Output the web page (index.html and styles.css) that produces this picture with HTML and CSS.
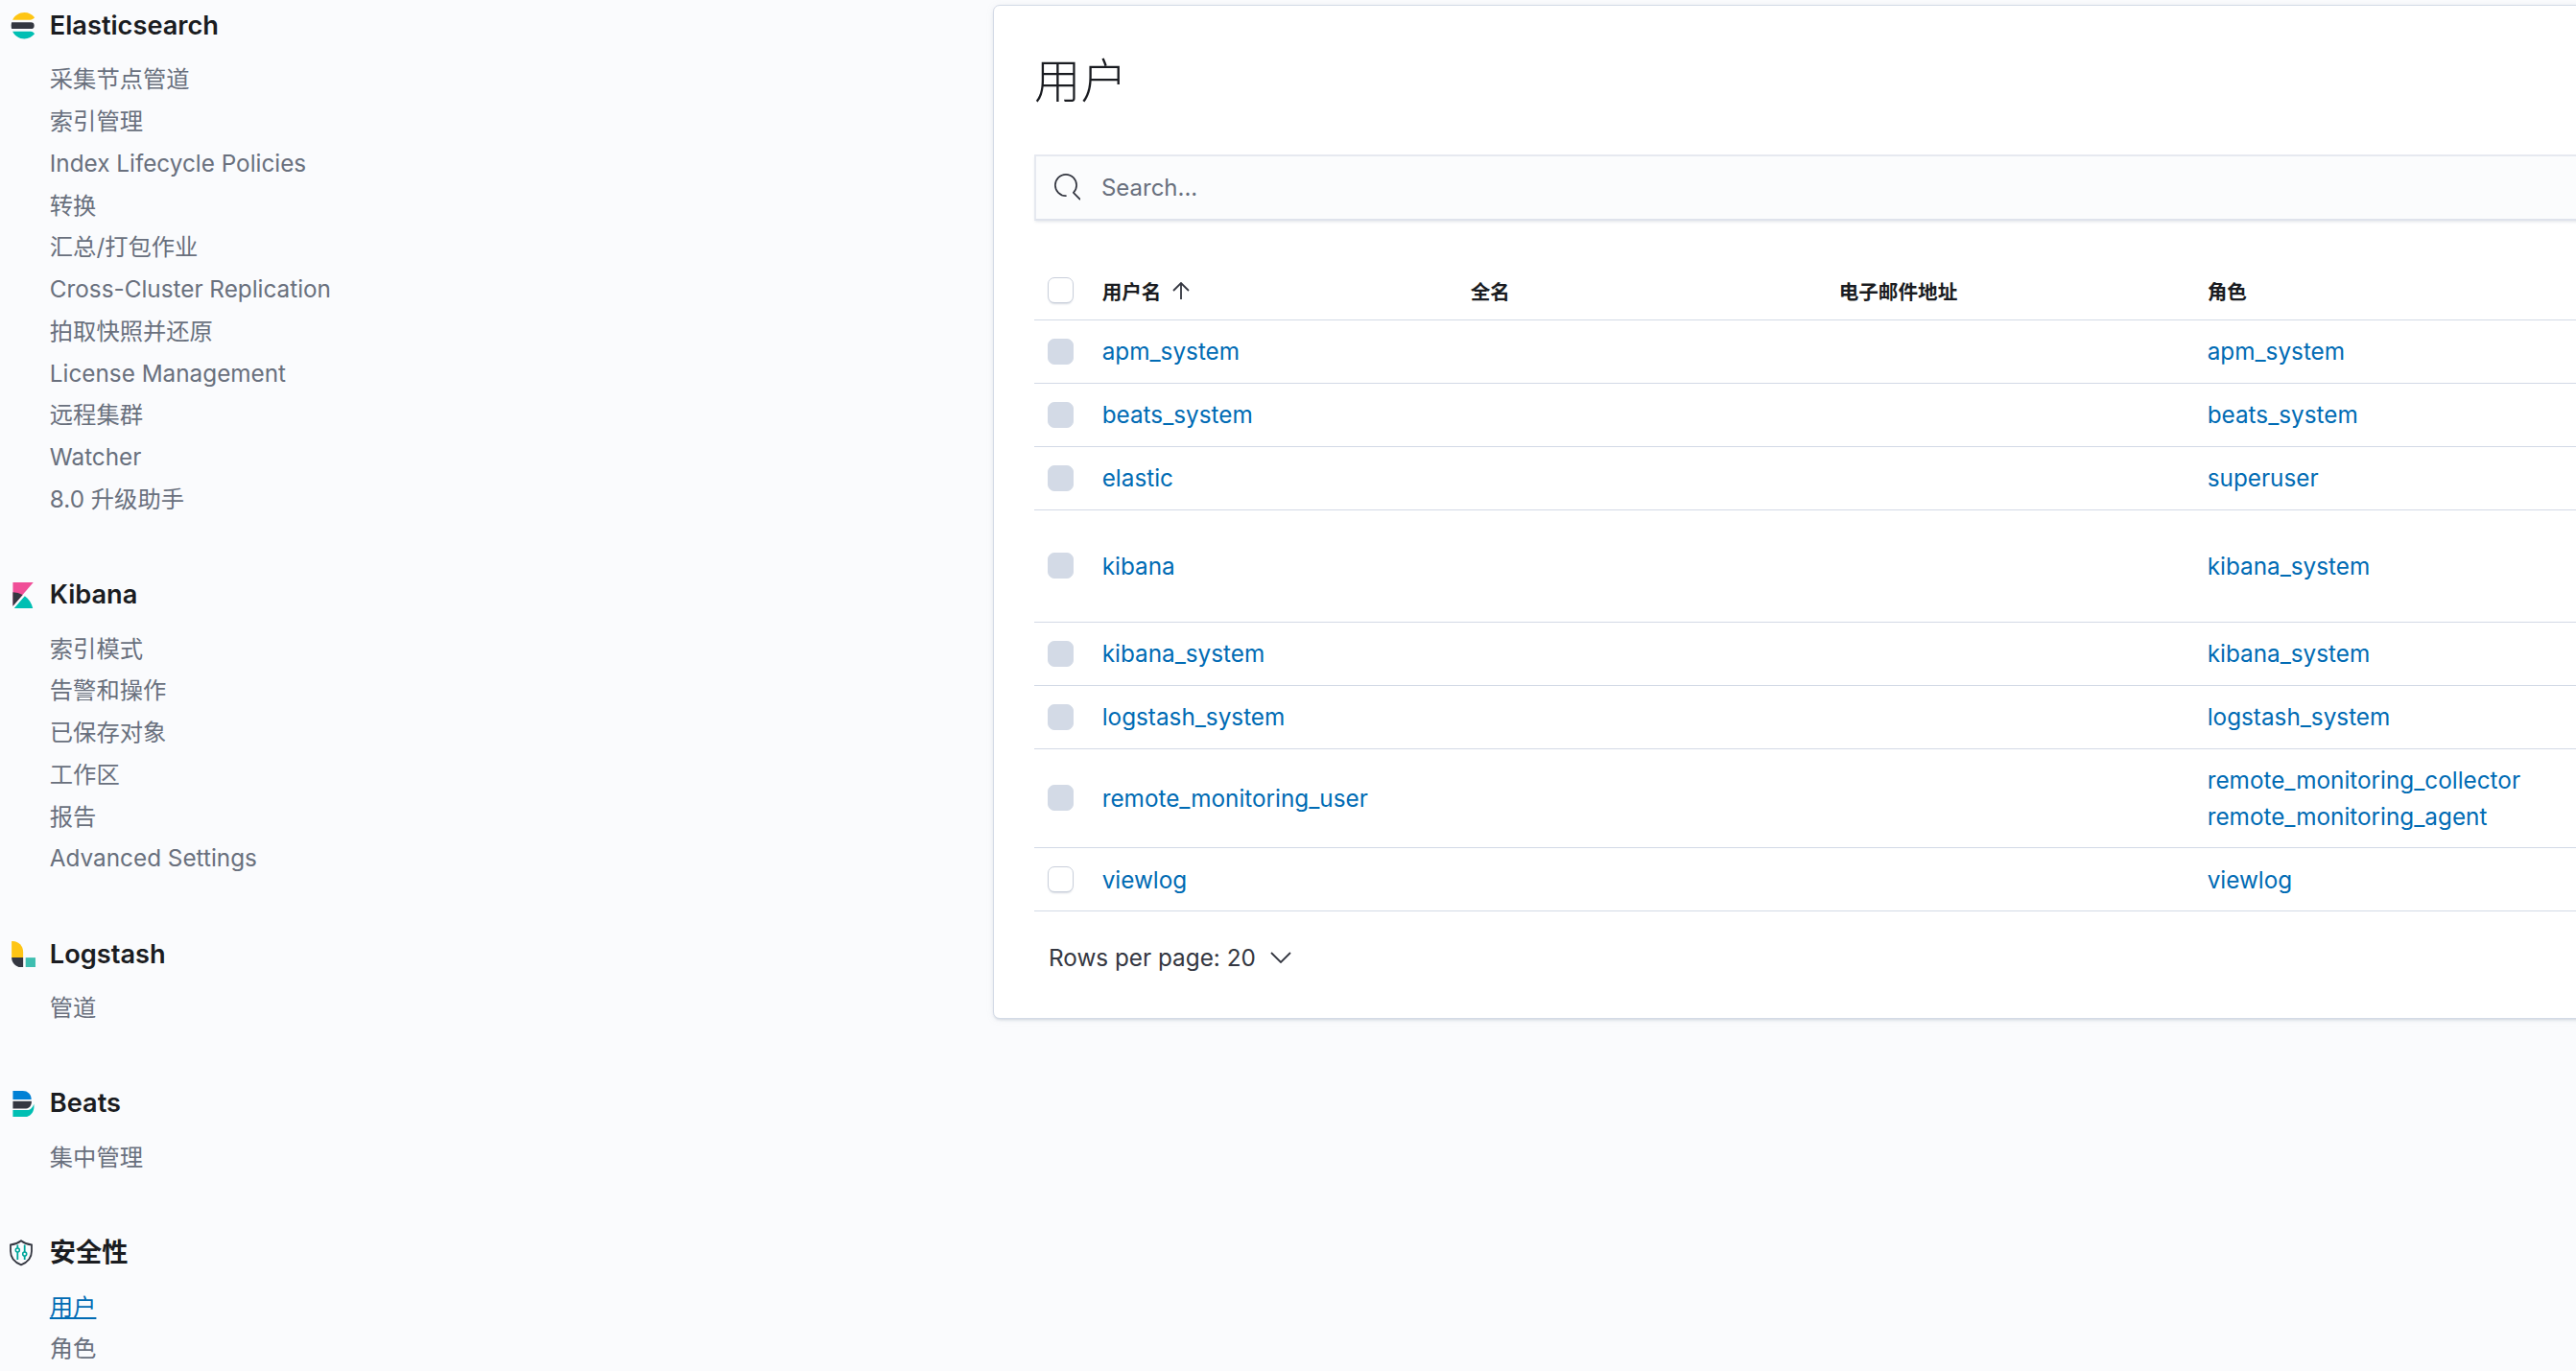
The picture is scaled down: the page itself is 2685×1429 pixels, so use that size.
FILE: index.html
```html
<!DOCTYPE html>
<html lang="zh-CN">
<head>
<meta charset="utf-8">
<title>用户</title>
<link rel="stylesheet" href="styles.css">
</head>
<body>
<div class="page">
  <nav class="sidebar">
    <section class="nav-section">
      <h2 class="nav-title">
        <svg class="logo" viewBox="0 0 32 32"><path fill="#FEC514" d="M28.924 7.662A15.381 15.381 0 0030.48 6C27.547 2.346 23.05 0 18 0 11.679 0 6.239 3.678 3.644 9H25.51a5.039 5.039 0 003.413-1.338"/><path fill="#343741" d="M2 16c0 1.384.194 2.72.524 4H26a4 4 0 000-8H2.524A15.984 15.984 0 002 16"/><path fill="#00BFB3" d="M25.51 23H3.645C6.24 28.323 11.679 32 18 32c5.05 0 9.547-2.346 12.48-6a15.381 15.381 0 00-1.556-1.662A5.039 5.039 0 0025.51 23"/></svg>
        <span>Elasticsearch</span>
      </h2>
      <ul class="nav-list">
        <li>采集节点管道</li>
        <li>索引管理</li>
        <li>Index Lifecycle Policies</li>
        <li>转换</li>
        <li>汇总/打包作业</li>
        <li>Cross-Cluster Replication</li>
        <li>拍取快照并还原</li>
        <li>License Management</li>
        <li>远程集群</li>
        <li>Watcher</li>
        <li>8.0 升级助手</li>
      </ul>
    </section>
    <section class="nav-section">
      <h2 class="nav-title">
        <svg class="logo" viewBox="0 0 32 32"><path fill="#F04E98" d="M4 0v28.789L28.935 0z"/><path fill="#343741" d="M4 12v16.789l11.906-13.738A24.721 24.721 0 004 12"/><path fill="#00BFB3" d="M18.479 16.664L6.268 30.754l-1.073 1.237h23.191c-1.252-6.292-4.883-11.719-9.908-15.327"/></svg>
        <span>Kibana</span>
      </h2>
      <ul class="nav-list">
        <li>索引模式</li>
        <li>告警和操作</li>
        <li>已保存对象</li>
        <li>工作区</li>
        <li>报告</li>
        <li>Advanced Settings</li>
      </ul>
    </section>
    <section class="nav-section">
      <h2 class="nav-title">
        <svg class="logo" viewBox="0 0 32 32"><path fill="#FEC514" d="M2.5 0H4c7 0 12.5 6 12.5 13v7H2.5z"/><path fill="#343741" d="M2.5 20h14v12h-2C8 32 2.5 27 2.5 20z"/><path fill="#3EBEB0" d="M19.5 20h12v12h-12z"/></svg>
        <span>Logstash</span>
      </h2>
      <ul class="nav-list">
        <li>管道</li>
      </ul>
    </section>
    <section class="nav-section">
      <h2 class="nav-title">
        <svg class="logo" viewBox="0 0 32 32"><path fill="#0080D5" d="M4 0h12c6 0 10.5 4 10.5 10.5H4z"/><path fill="#343741" d="M4 12.5h22.7c.5 3-1.5 9-6.7 9H4z"/><path fill="#00BFB3" d="M4 23.5h17c4 0 7-3 8.5-7.5 1.5 8-3 16-12 16H4z"/></svg>
        <span>Beats</span>
      </h2>
      <ul class="nav-list">
        <li>集中管理</li>
      </ul>
    </section>
    <section class="nav-section">
      <h2 class="nav-title">
        <svg class="logo" viewBox="0 0 27.4 27.4"><path fill="none" stroke="#343741" stroke-width="1.8" d="M1 5.5C5 5 9 3.5 12 1.2 15 3.5 19 5 23 5.5V12c0 7-5 12-11 14.4C6 24 1 19 1 12z"/><path fill="none" stroke="#00A69B" stroke-width="1.8" d="M8.3 5.5v3.5M8.3 13v8M15.7 5.5v8M15.7 17v4"/><circle fill="none" stroke="#00A69B" stroke-width="1.6" cx="8.3" cy="11" r="2"/><circle fill="none" stroke="#00A69B" stroke-width="1.6" cx="15.7" cy="15" r="2"/></svg>
        <span>安全性</span>
      </h2>
      <ul class="nav-list">
        <li><a class="nav-active" href="#">用户</a></li>
        <li>角色</li>
      </ul>
    </section>
  </nav>

  <main class="panel">
    <h1 class="panel-title">用户</h1>
    <div class="search">
      <svg class="search-icon" viewBox="0 0 16 16"><path fill="#343741" d="M11.271 11.978l3.872 3.873a.502.502 0 00.708 0 .502.502 0 000-.708l-3.565-3.564c2.38-2.747 2.267-6.923-.342-9.532-2.73-2.73-7.17-2.73-9.898 0-2.728 2.729-2.728 7.17 0 9.9a6.955 6.955 0 004.949 2.05.5.5 0 000-1 5.96 5.96 0 01-4.242-1.757 6.01 6.01 0 010-8.486c2.337-2.34 6.143-2.34 8.484 0a6.01 6.01 0 010 8.486.5.5 0 00.034.738z"/></svg>
      <span class="search-text">Search...</span>
    </div>
    <table class="users">
      <colgroup>
        <col class="col-check"><col class="col-data"><col class="col-data"><col class="col-data"><col class="col-last">
      </colgroup>
      <thead>
        <tr>
          <th><span class="check"></span></th>
          <th><span class="th-sort">用户名<svg class="sort-icon" viewBox="0 0 20 18"><path fill="none" stroke="#343741" stroke-width="1.8" d="M10 1v17M2 9l8-8 8 8"/></svg></span></th>
          <th>全名</th>
          <th>电子邮件地址</th>
          <th>角色</th>
        </tr>
      </thead>
      <tbody>
        <tr><td><span class="check check-off"></span></td><td><a href="#">apm_system</a></td><td></td><td></td><td><a href="#">apm_system</a></td></tr>
        <tr><td><span class="check check-off"></span></td><td><a href="#">beats_system</a></td><td></td><td></td><td><a href="#">beats_system</a></td></tr>
        <tr><td><span class="check check-off"></span></td><td><a href="#">elastic</a></td><td></td><td></td><td><a href="#">superuser</a></td></tr>
        <tr class="row-tall"><td><span class="check check-off"></span></td><td><a href="#">kibana</a></td><td></td><td></td><td><a href="#">kibana_system</a></td></tr>
        <tr><td><span class="check check-off"></span></td><td><a href="#">kibana_system</a></td><td></td><td></td><td><a href="#">kibana_system</a></td></tr>
        <tr><td><span class="check check-off"></span></td><td><a href="#">logstash_system</a></td><td></td><td></td><td><a href="#">logstash_system</a></td></tr>
        <tr><td><span class="check check-off"></span></td><td><a href="#">remote_monitoring_user</a></td><td></td><td></td><td><a class="role" href="#">remote_monitoring_collector</a><a class="role" href="#">remote_monitoring_agent</a></td></tr>
        <tr><td><span class="check"></span></td><td><a href="#">viewlog</a></td><td></td><td></td><td><a href="#">viewlog</a></td></tr>
      </tbody>
    </table>
    <div class="pager">
      <span>Rows per page: 20</span>
      <svg class="chevron" viewBox="0 0 22 12"><path fill="none" stroke="#343741" stroke-width="1.8" d="M1 1l10 10L21 1"/></svg>
    </div>
  </main>
</div>
</body>
</html>
```

FILE: styles.css
```css
* { box-sizing: border-box; }
html, body { margin: 0; padding: 0; height: 100%; }
body {
  background: #fafbfd;
  color: #343741;
  font-family: Inter, "Noto Sans CJK SC", sans-serif;
  font-size: 24.3px;
  overflow: hidden;
}
.page {
  display: flex;
  align-items: flex-start;
  width: 2685px;
  height: 1429px;
  overflow: hidden;
}

/* Sidebar */
.sidebar {
  flex: 0 0 1035px;
  padding: 11px 0 0 10px;
}
.nav-section { margin-bottom: 61.6px; }
.nav-title {
  display: flex;
  align-items: center;
  gap: 14.4px;
  height: 32px;
  margin: 0 0 18.4px;
  color: #1a1c21;
  font-size: 27.2px;
  font-weight: 600;
  line-height: 32px;
}
.logo { flex: none; width: 27.4px; height: 27.4px; }
.nav-list { list-style: none; margin: 0; padding: 0 0 0 41.8px; }
.nav-list li {
  height: 43.75px;
  color: #69707d;
  line-height: 43.75px;
}
.nav-active { color: #006bb4; text-decoration: underline; }

/* Panel */
.panel {
  flex: 0 0 1800px;
  height: 1057px;
  margin-top: 5px;
  padding: 0 42px;
  background: #fff;
  border: 1px solid #d3dae6;
  border-radius: 7px;
  box-shadow: 0 2px 3px -1px rgba(152, 162, 179, .35), 0 1px 8px -3px rgba(152, 162, 179, .35);
}
.panel-title {
  height: 154.5px;
  margin: 0;
  color: #1a1c21;
  font-size: 48.5px;
  font-weight: 300;
  line-height: 157px;
}
.search {
  display: flex;
  align-items: center;
  height: 69px;
  padding-left: 19px;
  gap: 21.5px;
  background: #fbfcfd;
  border: 2px solid #e6e9f0;
  border-bottom-color: #dfe3ec;
  box-shadow: 0 2px 3px -1px rgba(152, 162, 179, .3);
}
.search-icon { flex: none; width: 27.4px; height: 27.4px; }
.search-text { color: #69707d; font-size: 24px; }

/* Table */
.users {
  width: 1716px;
  margin-top: 42.5px;
  border-collapse: collapse;
  table-layout: fixed;
}
.col-check { width: 57px; }
.col-data { width: 384px; }
.col-last { width: 507px; }
.users th, .users td {
  padding: 14.7px 13.7px 12.7px;
  border-bottom: 1px solid #d3dae6;
  text-align: left;
  vertical-align: middle;
}
.users th {
  height: 61px;
  padding-top: 1px;
  padding-bottom: 0;
  color: #1a1c21;
  font-size: 20.6px;
  font-weight: 700;
}
.users td {
  height: 66px;
  line-height: 37.5px;
}
.users td .check { margin-top: -2px; }
.users .row-tall td { height: 117px; }
.users a { color: #006bb4; text-decoration: none; }
.users a.role { display: block; }
.check {
  display: block;
  width: 27px;
  height: 27px;
  background: #fff;
  border: 1px solid #c9cfdb;
  border-radius: 7px;
  box-shadow: 0 2px 2px -1px rgba(152, 162, 179, .4);
}
.check-off {
  background: #d3dae6;
  border-color: #d3dae6;
  box-shadow: none;
}
.th-sort { display: inline-flex; align-items: center; gap: 11px; }
.sort-icon { flex: none; width: 20px; height: 18px; }

/* Pagination */
.pager {
  display: flex;
  align-items: center;
  gap: 15px;
  height: 97px;
  padding-left: 15px;
  color: #343741;
}
.chevron { flex: none; width: 22px; height: 12px; }
```
